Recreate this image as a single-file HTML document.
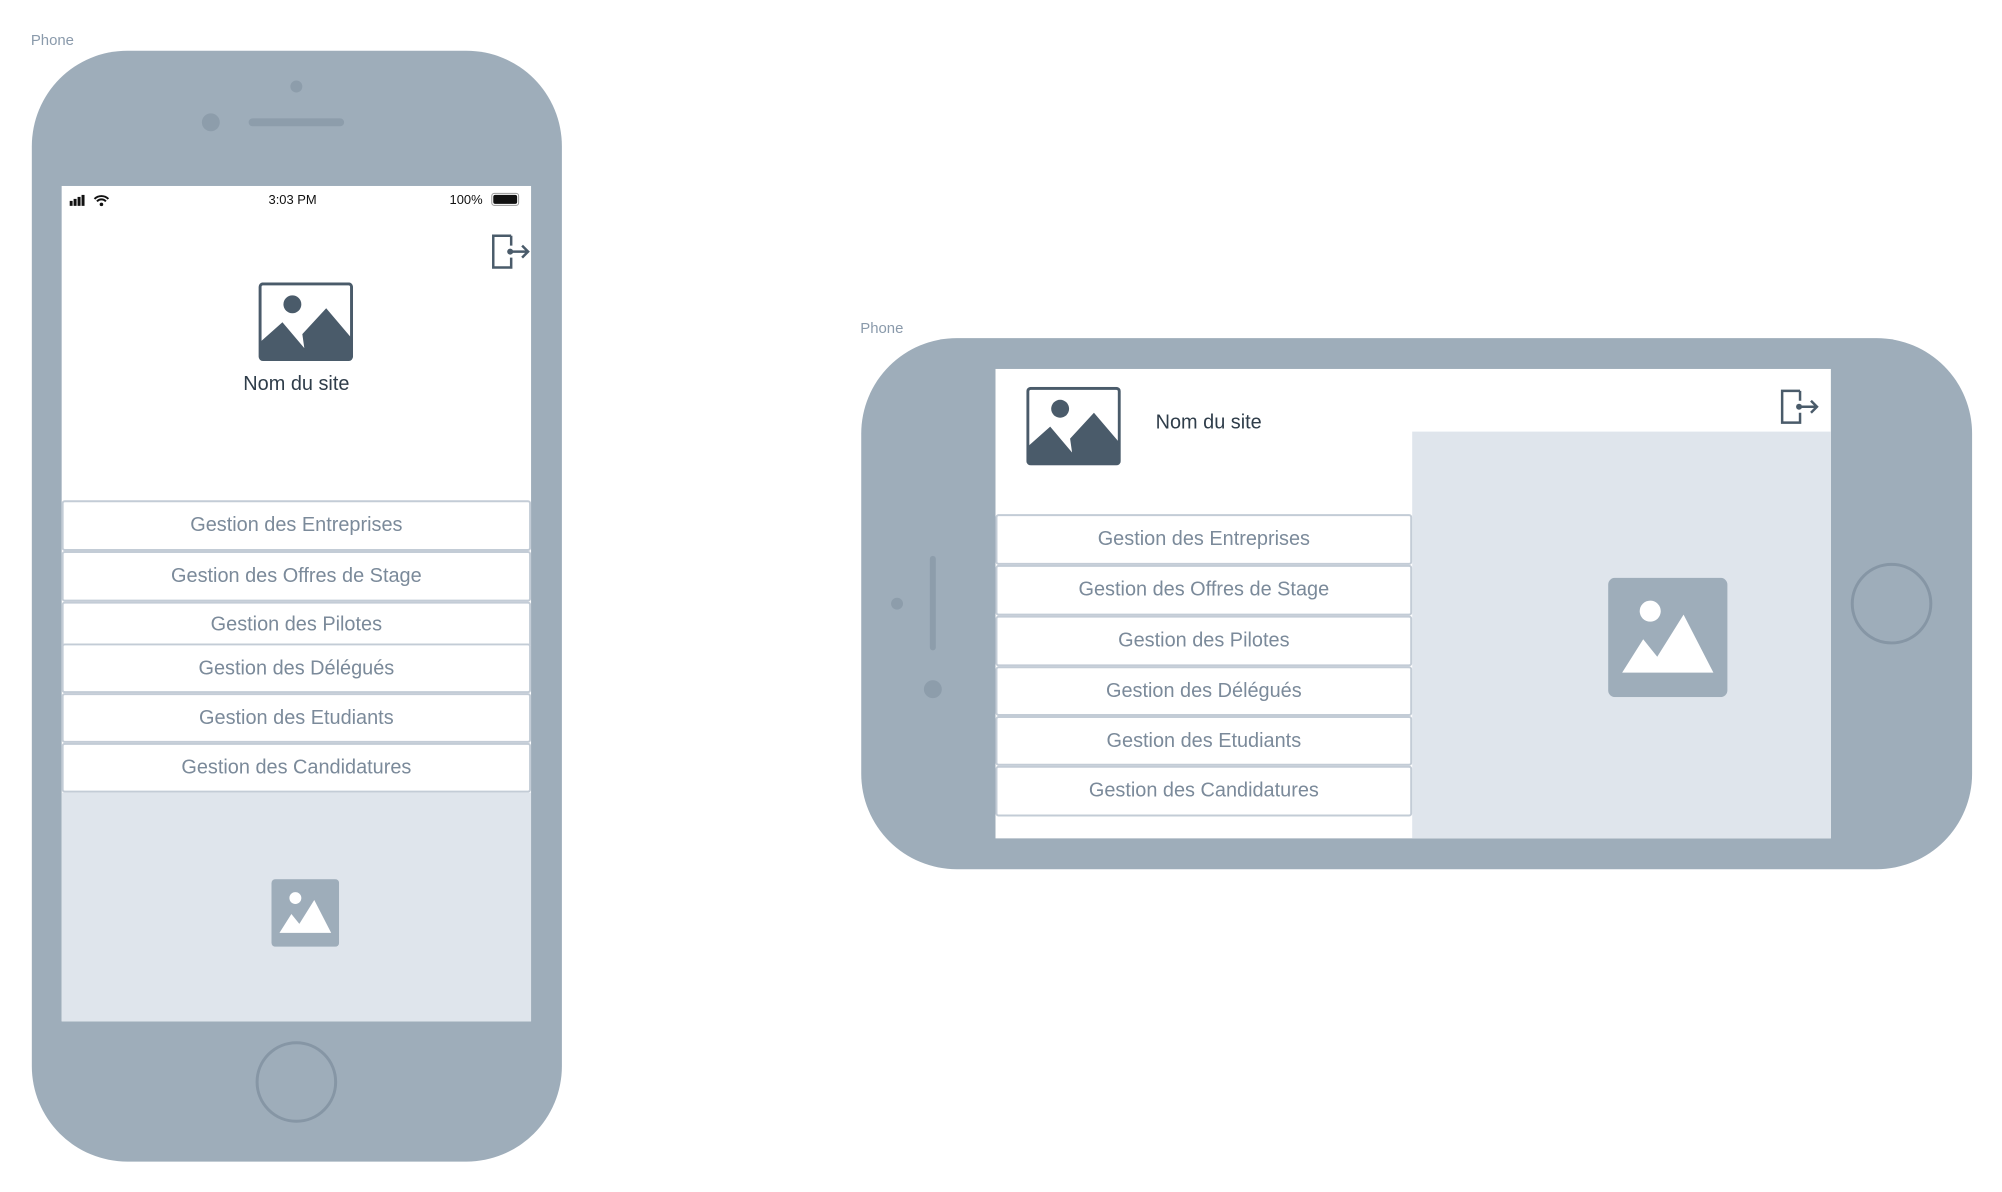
<!DOCTYPE html>
<html><head><meta charset="utf-8"><style>
*{margin:0;padding:0;box-sizing:border-box}
body{width:2002px;height:1192px;background:#fff;position:relative;overflow:hidden;font-family:"Liberation Sans",sans-serif}
#w{position:absolute;left:0;top:0;width:2002px;height:1192px;transform:scale(0.9945);transform-origin:0 0}
.a{position:absolute}
.lbl{font-size:15px;color:#8a9aab}
.phone{background:#9eadba}
.scr{background:#fff;overflow:hidden}
.row{position:absolute;left:0;background:#fff;border:2px solid #c3ccd6;border-radius:3px;color:#7b8a9a;font-size:20px;text-align:center;display:flex;align-items:center;justify-content:center}
.gray{background:#dfe5ec}
.title{color:#2f3d4a;font-size:20px}
</style></head><body><div id="w">

<div class="a lbl" style="left:31px;top:32px">Phone</div>
<div class="a phone" style="left:32px;top:51px;width:533px;height:1117px;border-radius:96px"></div>
<div class="a" style="left:292px;top:81px;width:12px;height:12px;border-radius:50%;background:#8d9dab"></div>
<div class="a" style="left:203px;top:114px;width:18px;height:18px;border-radius:50%;background:#8d9dab"></div>
<div class="a" style="left:250px;top:119px;width:96px;height:8px;border-radius:4px;background:#8d9dab"></div>
<div class="a" style="left:257px;top:1047px;width:82px;height:82px;border-radius:50%;border:3px solid #8696a5"></div>

<div class="a scr" style="left:62px;top:187px;width:472px;height:840px">
  <div class="a" style="left:8px;top:6px;font-size:13px;font-weight:bold;color:#111">
    <svg width="50" height="16" viewBox="0 0 50 16"><rect x="0" y="9" width="3" height="5" fill="#111"/><rect x="4" y="7" width="3" height="7" fill="#111"/><rect x="8" y="5" width="3" height="9" fill="#111"/><rect x="12" y="3" width="3" height="11" fill="#111"/><path d="M25 7a10 10 0 0 1 14 0M27.5 9.5a6 6 0 0 1 9 0" stroke="#111" stroke-width="2" fill="none"/><circle cx="32" cy="12.5" r="1.8" fill="#111"/></svg>
  </div>
  <div class="a" style="left:208px;top:6px;font-size:13px;color:#111">3:03 PM</div>
  <div class="a" style="left:390px;top:6px;font-size:13px;color:#111">100%</div>
  <div class="a" style="left:432px;top:7px;width:28px;height:13px;border:1px solid #999;border-radius:3px;padding:1px"><div style="width:100%;height:100%;background:#111;border-radius:2px"></div></div>

  <svg class="a" style="left:432px;top:48px" width="40" height="36" viewBox="0 0 40 36"><path d="M20 2H2V34H20V24M20 2V12" stroke="#4a5b6a" stroke-width="2.5" fill="none"/><circle cx="19" cy="18" r="3" fill="#4a5b6a"/><path d="M19 18H37M31 12L37 18L31 24" stroke="#4a5b6a" stroke-width="2.5" fill="none"/></svg>

  <svg class="a" style="left:198px;top:97px" width="95" height="79" viewBox="0 0 95 79"><rect x="1.5" y="1.5" width="92" height="76" rx="3" fill="#fff" stroke="#4a5b6a" stroke-width="3"/><circle cx="34" cy="22" r="9" fill="#4a5b6a"/><path d="M1.5 60L24 40L46 66L44 52L68 26L93.5 56V75a3 3 0 0 1-3 3H4a3 3 0 0 1-3-3Z" fill="#4a5b6a"/></svg>
  <div class="a title" style="left:0;width:472px;top:188px;text-align:center">Nom du site</div>

  <div class="row" style="top:316px;width:472px;height:51px">Gestion des Entreprises</div>
  <div class="row" style="top:367px;width:472px;height:51px">Gestion des Offres de Stage</div>
  <div class="row" style="top:418px;width:472px;height:46px">Gestion des Pilotes</div>
  <div class="row" style="top:460px;width:472px;height:50px">Gestion des Délégués</div>
  <div class="row" style="top:510px;width:472px;height:50px">Gestion des Etudiants</div>
  <div class="row" style="top:560px;width:472px;height:50px">Gestion des Candidatures</div>
  <div class="a gray" style="left:0;top:610px;width:472px;height:230px"></div>
  <svg class="a" style="left:211px;top:697px" width="68" height="68" viewBox="0 0 68 68"><rect width="68" height="68" rx="4" fill="#9eadba"/><circle cx="24" cy="19" r="6" fill="#fff"/><path d="M8 54L20 35L28 45L43 21L60 54Z" fill="#fff"/></svg>
</div>

<div class="a lbl" style="left:865px;top:322px">Phone</div>
<div class="a phone" style="left:866px;top:340px;width:1117px;height:534px;border-radius:96px"></div>
<div class="a" style="left:935px;top:559px;width:6px;height:95px;border-radius:3px;background:#8d9dab"></div>
<div class="a" style="left:896px;top:601px;width:12px;height:12px;border-radius:50%;background:#8d9dab"></div>
<div class="a" style="left:929px;top:684px;width:18px;height:18px;border-radius:50%;background:#8d9dab"></div>
<div class="a" style="left:1861px;top:566px;width:82px;height:82px;border-radius:50%;border:3px solid #8696a5"></div>

<div class="a scr" style="left:1001px;top:371px;width:840px;height:472px">
  <svg class="a" style="left:31px;top:18px" width="95" height="79" viewBox="0 0 95 79"><rect x="1.5" y="1.5" width="92" height="76" rx="3" fill="#fff" stroke="#4a5b6a" stroke-width="3"/><circle cx="34" cy="22" r="9" fill="#4a5b6a"/><path d="M1.5 60L24 40L46 66L44 52L68 26L93.5 56V75a3 3 0 0 1-3 3H4a3 3 0 0 1-3-3Z" fill="#4a5b6a"/></svg>
  <div class="a title" style="left:161px;top:43px">Nom du site</div>
  <svg class="a" style="left:789px;top:20px" width="40" height="36" viewBox="0 0 40 36"><path d="M20 2H2V34H20V24M20 2V12" stroke="#4a5b6a" stroke-width="2.5" fill="none"/><circle cx="19" cy="18" r="3" fill="#4a5b6a"/><path d="M19 18H37M31 12L37 18L31 24" stroke="#4a5b6a" stroke-width="2.5" fill="none"/></svg>
  <div class="a gray" style="left:419px;top:63px;width:421px;height:409px"></div>
  <svg class="a" style="left:616px;top:210px" width="120" height="120" viewBox="0 0 68 68"><rect width="68" height="68" rx="4" fill="#9eadba"/><circle cx="24" cy="19" r="6" fill="#fff"/><path d="M8 54L20 35L28 45L43 21L60 54Z" fill="#fff"/></svg>
  <div class="row" style="top:146px;width:419px;height:51px">Gestion des Entreprises</div>
  <div class="row" style="top:197px;width:419px;height:51px">Gestion des Offres de Stage</div>
  <div class="row" style="top:248px;width:419px;height:51px">Gestion des Pilotes</div>
  <div class="row" style="top:299px;width:419px;height:50px">Gestion des Délégués</div>
  <div class="row" style="top:349px;width:419px;height:50px">Gestion des Etudiants</div>
  <div class="row" style="top:399px;width:419px;height:51px">Gestion des Candidatures</div>
</div>
</div></body></html>
